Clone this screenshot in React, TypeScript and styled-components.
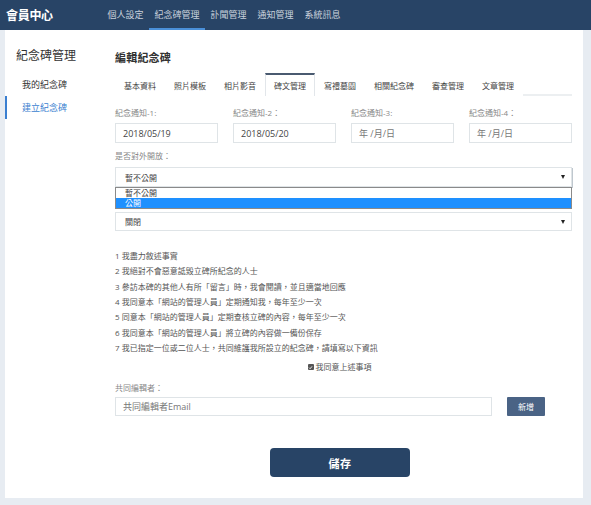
import React from "react";
import styled, { createGlobalStyle } from "styled-components";

const Global = createGlobalStyle`
  html, body { margin: 0; padding: 0; }
  body {
    background: #e7ecf2;
    font-family: "Open Sans", "Noto Sans CJK TC", sans-serif;
    color: #444;
    width: 591px;
    height: 505px;
    overflow: hidden;
  }
  * { box-sizing: border-box; }
`;

const Header = styled.header`
  height: 30px;
  background: #284466;
  display: flex;
  align-items: stretch;
  padding-left: 6px;
`;

const Brand = styled.div`
  color: #fff;
  font-size: 12px;
  font-weight: 700;
  display: flex;
  align-items: center;
  width: 96px;
  letter-spacing: -0.3px;
`;

const Nav = styled.nav`
  display: flex;
  align-items: stretch;
`;

const NavItem = styled.a<{ $active?: boolean }>`
  display: flex;
  align-items: center;
  padding: 0 5.5px;
  font-size: 9px;
  color: #c9d1dc;
  border-bottom: 2px solid ${(p) => (p.$active ? "#4a90d9" : "transparent")};
  padding-top: 1px;
`;

const Page = styled.div`
  padding: 0 8px 7px 5px;
`;

const Panel = styled.div`
  background: #fff;
  height: 468px;
  display: flex;
`;

const Sidebar = styled.aside`
  width: 110px;
  flex-shrink: 0;
  padding-top: 18px;
`;

const SideTitle = styled.div`
  font-size: 12px;
  color: #333;
  padding-left: 11px;
  line-height: 16px;
  margin-bottom: 9px;
`;

const SideLink = styled.div<{ $active?: boolean }>`
  font-size: 9px;
  line-height: 23px;
  padding-left: 15px;
  color: ${(p) => (p.$active ? "#3b7fd0" : "#333")};
  border-left: 2px solid ${(p) => (p.$active ? "#3b7fd0" : "transparent")};
`;

const Main = styled.main`
  flex: 1;
  min-width: 0;
  padding: 20px 11px 0 0;
  display: flex;
  flex-direction: column;
`;

const Heading = styled.h2`
  margin: 0;
  font-size: 11px;
  font-weight: 700;
  color: #333;
  line-height: 15px;
  letter-spacing: 0.2px;
`;

const Tabs = styled.div`
  display: flex;
  margin-top: 8px;
  border-bottom: 2px solid #eceff1;
  height: 23px;
`;

const Tab = styled.div<{ $active?: boolean }>`
  padding: 0 8px;
  font-size: 8px;
  display: flex;
  align-items: center;
  color: #444;
  height: 23px;
  background: #fff;
  border-top: 2px solid ${(p) => (p.$active ? "#4a5a70" : "transparent")};
  border-left: 1px solid ${(p) => (p.$active ? "#e2e6ea" : "transparent")};
  border-right: 1px solid ${(p) => (p.$active ? "#e2e6ea" : "transparent")};
  position: relative;
  z-index: 1;
`;

const DateGrid = styled.div`
  display: grid;
  grid-template-columns: repeat(4, 1fr);
  column-gap: 15px;
  margin-top: 11px;
`;

const Field = styled.div`
  display: flex;
  flex-direction: column;
`;

const Label = styled.label<{ $gap?: number }>`
  display: block;
  font-size: 8px;
  color: #888;
  line-height: 12px;
  margin-bottom: ${(p) => p.$gap ?? 4}px;
`;

const Input = styled.div<{ $placeholder?: boolean }>`
  height: 20px;
  border: 1px solid #dfe4e7;
  display: flex;
  align-items: center;
  padding-left: 7px;
  font-size: 9px;
  color: ${(p) => (p.$placeholder ? "#777" : "#444")};
`;

const Section = styled.div<{ $top: number }>`
  margin-top: ${(p) => p.$top}px;
  position: relative;
`;

const SelectWrap = styled.div`
  position: relative;
`;

const Select = styled.div<{ $focused?: boolean }>`
  height: ${(p) => (p.$focused ? 20 : 19)}px;
  border: 1px solid #dfe4e7;
  box-shadow: ${(p) => (p.$focused ? "1px 1px 0 #bfc7ce" : "none")};
  display: flex;
  align-items: center;
  justify-content: space-between;
  padding: 0 6px 0 9px;
  font-size: 8px;
  color: #444;
`;

const Arrow = styled.span`
  width: 0;
  height: 0;
  border-left: 2.5px solid transparent;
  border-right: 2.5px solid transparent;
  border-top: 4px solid #222;
`;

const Dropdown = styled.div`
  position: absolute;
  left: 0;
  right: 0;
  top: 20px;
  border: 1px solid #8a8a8a;
  background: #fff;
  z-index: 5;
`;

const Option = styled.div<{ $selected?: boolean }>`
  height: 10px;
  font-size: 8px;
  line-height: 10px;
  padding-left: 9px;
  background: ${(p) => (p.$selected ? "#1e90ff" : "#fff")};
  color: ${(p) => (p.$selected ? "#fff" : "#444")};
`;

const Spacer = styled.div<{ $h: number }>`
  height: ${(p) => p.$h}px;
`;

const List = styled.ol`
  list-style: none;
  margin: 0;
  padding: 0;
  font-size: 8px;
  color: #555;
`;

const ListItem = styled.li`
  line-height: 15.35px;
`;

const AgreeRow = styled.div`
  display: flex;
  justify-content: center;
  align-items: center;
  gap: 1px;
  font-size: 8px;
  color: #555;
  margin-top: 6px;
  line-height: 12px;
  padding-right: 8px;
`;

const Check = styled.span`
  width: 6px;
  height: 6px;
  background: #555;
  border-radius: 1px;
  display: inline-flex;
  align-items: center;
  justify-content: center;
  margin-right: 1px;
`;

const EditorRow = styled.div`
  display: flex;
  align-items: center;
  gap: 15px;
`;

const EditorInput = styled(Input)`
  width: 377px;
  height: 19px;
`;

const AddButton = styled.button`
  width: 38px;
  height: 19px;
  border: none;
  background: #4a6385;
  color: #fff;
  font-size: 8px;
  font-family: inherit;
  padding: 0;
  border-radius: 1px;
`;

const SaveRow = styled.div`
  display: flex;
  justify-content: center;
  margin-top: 32px;
  padding-right: 7px;
`;

const SaveButton = styled.button`
  width: 140px;
  height: 29px;
  background: #284466;
  color: #fff;
  border: none;
  border-radius: 4px;
  font-size: 11px;
  font-weight: 700;
  font-family: inherit;
  letter-spacing: 0.5px;
`;

const navItems = ["個人設定", "紀念碑管理", "訃聞管理", "通知管理", "系統訊息"];
const tabs = ["基本資料", "照片模板", "相片影音", "碑文管理", "寫禮墓園", "相關紀念碑", "審查管理", "文章管理"];
const dates = [
  { label: "紀念通知-1:", value: "2018/05/19" },
  { label: "紀念通知-2：", value: "2018/05/20" },
  { label: "紀念通知-3:", value: "年 /月/日", ph: true },
  { label: "紀念通知-4：", value: "年 /月/日", ph: true },
];
const rules = [
  "1 我盡力敘述事實",
  "2 我絕對不會惡意詆毀立碑所紀念的人士",
  "3 參訪本碑的其他人有所「留言」時，我會閱讀，並且適當地回應",
  "4 我同意本「網站的管理人員」定期通知我，每年至少一次",
  "5 同意本「網站的管理人員」定期查核立碑的內容，每年至少一次",
  "6 我同意本「網站的管理人員」將立碑的內容做一備份保存",
  "7 我已指定一位或二位人士，共同維護我所設立的紀念碑，請填寫以下資訊",
];

export default function App() {
  return (
    <>
      <Global />
      <Header>
        <Brand>會員中心</Brand>
        <Nav>
          {navItems.map((n) => (
            <NavItem key={n} $active={n === "紀念碑管理"}>
              {n}
            </NavItem>
          ))}
        </Nav>
      </Header>
      <Page>
        <Panel>
          <Sidebar>
            <SideTitle>紀念碑管理</SideTitle>
            <SideLink>我的紀念碑</SideLink>
            <SideLink $active>建立紀念碑</SideLink>
          </Sidebar>
          <Main>
            <Heading>編輯紀念碑</Heading>
            <Tabs>
              {tabs.map((t) => (
                <Tab key={t} $active={t === "碑文管理"}>
                  {t}
                </Tab>
              ))}
            </Tabs>
            <DateGrid>
              {dates.map((d) => (
                <Field key={d.label}>
                  <Label>{d.label}</Label>
                  <Input $placeholder={d.ph}>{d.value}</Input>
                </Field>
              ))}
            </DateGrid>
            <Section $top={7}>
              <Label $gap={5}>是否對外開放：</Label>
              <SelectWrap>
                <Select $focused>
                  暫不公開
                  <Arrow />
                </Select>
                <Dropdown>
                  <Option>暫不公開</Option>
                  <Option $selected>公開</Option>
                </Dropdown>
              </SelectWrap>
            </Section>
            <Spacer $h={25} />
            <Select>
              關閉
              <Arrow />
            </Select>
            <Section $top={17}>
              <List>
                {rules.map((r) => (
                  <ListItem key={r}>{r}</ListItem>
                ))}
              </List>
            </Section>
            <AgreeRow>
              <Check>
                <svg width="5" height="5" viewBox="0 0 10 10">
                  <path d="M2 5.2 L4.2 7.4 L8 2.8" stroke="#fff" strokeWidth="1.8" fill="none" />
                </svg>
              </Check>
              我同意上述事項
            </AgreeRow>
            <Section $top={9}>
              <Label $gap={3}>共同編輯者：</Label>
              <EditorRow>
                <EditorInput $placeholder>共同編輯者Email</EditorInput>
                <AddButton>新增</AddButton>
              </EditorRow>
            </Section>
            <SaveRow>
              <SaveButton>儲存</SaveButton>
            </SaveRow>
          </Main>
        </Panel>
      </Page>
    </>
  );
}
